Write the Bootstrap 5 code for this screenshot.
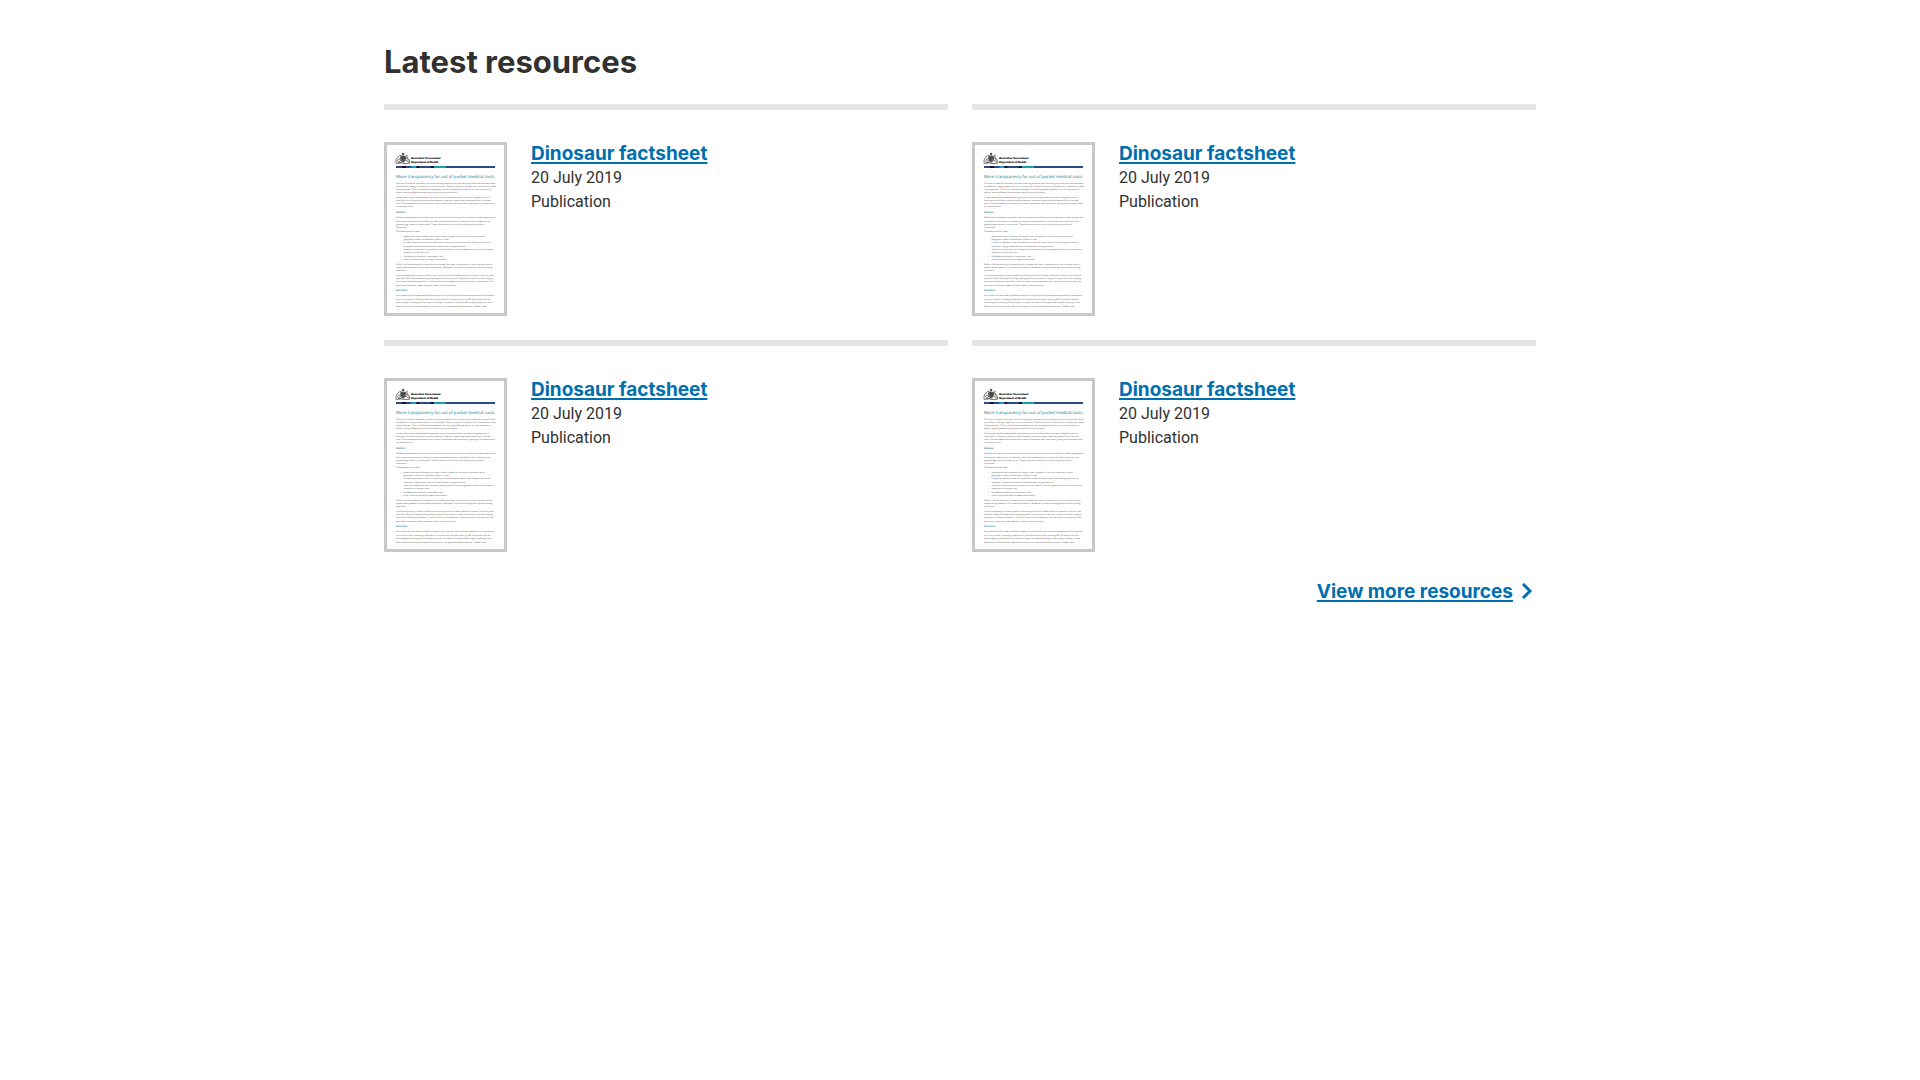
<!DOCTYPE html>
<html lang="en">
<head>
<meta charset="utf-8">
<meta name="viewport" content="width=device-width, initial-scale=1">
<title>Latest resources</title>
<link rel="stylesheet" href="https://cdn.jsdelivr.net/npm/bootstrap@5.3.0/dist/css/bootstrap.min.css">
<style>
body { font-family: Roboto, "Liberation Sans", sans-serif; font-size: 16px; line-height: 24px; color: #313131; background: #fff; }
.page-wrap { max-width: 1200px; padding: 40px 24px; }
.section-title { font-family: Inter, "Liberation Sans", sans-serif; font-size: 31px; line-height: 40px; font-weight: 700; padding-top: 2px; margin-bottom: 22px; }
.resource { border-top: 6px solid #e4e4e4; padding-top: 32px; }
.thumb { width: 123px; height: 174px; border: 3px solid #c8c8c8; }
.res-link { font-family: Inter, "Liberation Sans", sans-serif; color: #006fb0; font-size: 19px; font-weight: 700; text-decoration-thickness: 2px; text-underline-offset: 2px; }
.res-title { font-size: 19px; line-height: 24px; }
.doc-body, .doc-head, .doc-title, .doc-gov { text-rendering: geometricPrecision; }
.doc-body { font: 21px "Open Sans", sans-serif; fill: #444; }
.doc-head { font: 600 24px "Open Sans", sans-serif; fill: #12808c; }
.doc-title { font: 42px "Open Sans", sans-serif; fill: #0c7884; }
.doc-gov { font: bold 29px "Liberation Serif", serif; fill: #000; stroke: #000; stroke-width: 1; }
</style>
<script src="https://cdn.jsdelivr.net/npm/bootstrap@5.3.0/dist/js/bootstrap.bundle.min.js"></script>
</head>
<body>
<svg class="d-none" aria-hidden="true">
  <symbol id="factsheet" viewBox="30 30 1170 1680">
    <g fill="none" stroke="#333" stroke-width="7">
      <path d="M124 220c-8-30-4-60 26-76M150 144l14-14 10 14M130 186l36-22M138 204l32-20M146 214l30-12M252 214c6-20 2-36-14-50M238 164l-14-28 12-4M214 152l32 28M212 178l36 22"/>
      <path d="M130 212q30-12 60 0t64-2"/>
      <path fill="#777" d="M168 142h46v36q-8 20-23 24-15-4-23-24zM168 160h46M183 142v52M199 142v52"/>
      <path d="M191 108v28M178 120h26M182 111l18 18M200 111l-18 18"/>
    </g>
    <text class="doc-gov"><tspan x="270" y="168">Australian Government</tspan><tspan x="270" y="208">Department of Health</tspan></text>
    <path fill="#2b4a8c" d="M120 240h990v20H120z"/>
    <path fill="#101828" d="M180 240h40v20h-40zM327 240h26v20h-26zM467 240h33v20h-33z"/>
    <path fill="#1c9ad6" d="M273 240h47v20h-47z"/>
    <path fill="#1aa3a3" d="M500 240h120v20H500z"/>
    <text class="doc-title" x="120" y="356">More transparency for out of pocket medical costs</text>
    <text class="doc-body">
      <tspan x="120" y="415">The cost of medical treatment can be concerning whether you are having a private non-insured health</tspan>
      <tspan x="120" y="447">procedure or seeing a specialist for a consultation. There can be out of pocket costs, sometimes called</tspan>
      <tspan x="120" y="479">a ‘gap payment’. This is the difference between the fee charged by the doctor for the treatment or</tspan>
      <tspan x="120" y="511">service, and any Medicare and private health insurance rebate.</tspan>
      <tspan x="120" y="557">A new website will be developed to give you more information about the fees charged by cost of</tspan>
      <tspan x="120" y="589">specialists for different services and procedures, help you understand the potential out of pocket</tspan>
      <tspan x="120" y="621">costs. The new website will allow you to search specialties and treatments, giving you the opportunity</tspan>
      <tspan x="120" y="653">to compare costs.</tspan>
      <tspan x="120" y="762">Collaboration between consumers, doctors and insurers will ensure this website includes appropriate</tspan>
      <tspan x="120" y="795">information and features to help you make informed decisions. Its evolution will initially focus on</tspan>
      <tspan x="120" y="827">gynaecology, obstetrics and cancer. These treatments are often clinically long in private for</tspan>
      <tspan x="120" y="859">consumers.</tspan>
      <tspan x="120" y="902">The website will include:</tspan>
      <tspan x="160" y="948">•</tspan><tspan x="195" y="948">government data showing the range of fees charged for common treatments within</tspan>
      <tspan x="195" y="981">geographic areas (for example, states or cities),</tspan>
      <tspan x="160" y="1014">•</tspan><tspan x="195" y="1014">a medical specialists’ free-for-treatments and information about their billing practices (for</tspan>
      <tspan x="195" y="1047">example if they provide services covered under no gap policies),</tspan>
      <tspan x="160" y="1080">•</tspan><tspan x="195" y="1080">whether the specialist participates in private health fund arrangements which can remove or</tspan>
      <tspan x="195" y="1113">reduce out of pocket costs,</tspan>
      <tspan x="160" y="1148">•</tspan><tspan x="195" y="1148">the Medicare rebate for treatments, and</tspan>
      <tspan x="160" y="1181">•</tspan><tspan x="195" y="1181">other information doctors deem worthwhile.</tspan>
      <tspan x="120" y="1227">Whilst it will be voluntary for specialists to provide their fees, transparency of out of pocket costs is</tspan>
      <tspan x="120" y="1260">supported by leaders in the medical profession. We expect this will encourage participation among</tspan>
      <tspan x="120" y="1292">specialists.</tspan>
      <tspan x="120" y="1337">If you are planning to have a medical treatment you will still need to discuss the exact cost with your</tspan>
      <tspan x="120" y="1370">specialist. While the website will give you general information to help you compare the fee charging</tspan>
      <tspan x="120" y="1402">practices of different specialists, it will not take into consideration your personal circumstances, like</tspan>
      <tspan x="120" y="1435">your exact treatment needs and your health insurance policy.</tspan>
      <tspan x="120" y="1542">Information will be made available to explain out of pocket costs and raise awareness of the website</tspan>
      <tspan x="120" y="1577">so it’s at a time of choosing a specialist or consultation with your referring GP. Consumers will be</tspan>
      <tspan x="120" y="1609">encouraged to investigate their options as high cost does not always mean a higher quality of care.</tspan>
      <tspan x="120" y="1650">Specialists will also be educated on the impact of unreasonable and excessive / ‘Hidden’ fees.</tspan>
    </text>
    <text class="doc-head"><tspan x="120" y="713">Website</tspan><tspan x="120" y="1492">Education</tspan></text>
  </symbol>
</svg>
<main class="container-fluid page-wrap">
  <h2 class="section-title">Latest resources</h2>
  <div class="row g-4">
    <div class="col-12 col-md-6"><article class="resource d-flex gap-4">
      <svg class="thumb flex-shrink-0" role="img" aria-label="Factsheet cover"><use href="#factsheet"/></svg>
      <div><h3 class="res-title mb-0"><a class="res-link" href="#">Dinosaur factsheet</a></h3><div>20 July 2019</div><div>Publication</div></div>
    </article></div>
    <div class="col-12 col-md-6"><article class="resource d-flex gap-4">
      <svg class="thumb flex-shrink-0" role="img" aria-label="Factsheet cover"><use href="#factsheet"/></svg>
      <div><h3 class="res-title mb-0"><a class="res-link" href="#">Dinosaur factsheet</a></h3><div>20 July 2019</div><div>Publication</div></div>
    </article></div>
    <div class="col-12 col-md-6"><article class="resource d-flex gap-4">
      <svg class="thumb flex-shrink-0" role="img" aria-label="Factsheet cover"><use href="#factsheet"/></svg>
      <div><h3 class="res-title mb-0"><a class="res-link" href="#">Dinosaur factsheet</a></h3><div>20 July 2019</div><div>Publication</div></div>
    </article></div>
    <div class="col-12 col-md-6"><article class="resource d-flex gap-4">
      <svg class="thumb flex-shrink-0" role="img" aria-label="Factsheet cover"><use href="#factsheet"/></svg>
      <div><h3 class="res-title mb-0"><a class="res-link" href="#">Dinosaur factsheet</a></h3><div>20 July 2019</div><div>Publication</div></div>
    </article></div>
  </div>
  <div class="d-flex justify-content-end align-items-center gap-2 mt-4 pt-1">
    <a class="res-link" href="#">View more resources</a>
    <svg width="15" height="18" viewBox="0 0 15 18" fill="none" stroke="#006fb0" stroke-width="3" aria-hidden="true"><path d="M2 1l7 7-7 7"/></svg>
  </div>
</main>
</body>
</html>
